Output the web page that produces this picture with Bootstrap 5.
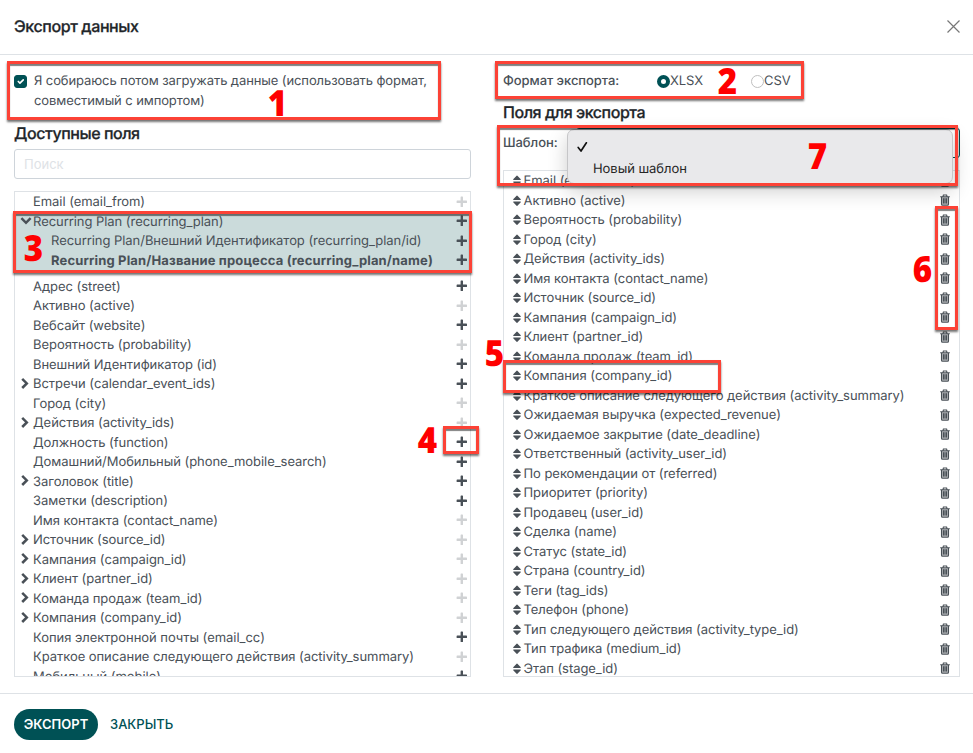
<!DOCTYPE html>
<html lang="ru">
<head>
<meta charset="utf-8">
<title>Экспорт данных</title>
<link href="https://cdn.jsdelivr.net/npm/bootstrap@5.3.0/dist/css/bootstrap.min.css" rel="stylesheet">
<style>
body{font-family:Inter,"Liberation Sans",sans-serif;font-size:13px;line-height:19.5px;letter-spacing:-.05px;color:#495057;background:#fff;text-rendering:geometricPrecision}
.dialog-page{width:973px;height:753px;overflow:hidden}
.dialog-head{height:55px;padding:0 12px 2px 14px;border-color:#dee2e6!important}
.dialog-head h1,.pane-title{font-size:16px;font-weight:500;color:#212529;line-height:20px;margin:0;letter-spacing:-.4px;-webkit-text-stroke:.25px #212529}
.pane-title{letter-spacing:-.45px}
.dialog-main{height:638px;gap:32px;padding:16px 13px 0 14px}
.pane{width:457px}
.compat{height:52px;gap:7px}
.form-check-input.tick{width:13px;height:13px;margin:4px 0 0;border-radius:3px}
.form-check-input:checked{background-color:#005155;border-color:#005155}
.compat label{line-height:20px;letter-spacing:-.1px}
.search-box{height:30px;margin-top:6px;font-size:13px;padding:0 9px;border-color:#ced4da;border-radius:3px}
.search-box::placeholder{color:#dee2e6}
.field-list{border:1px solid #dee2e6;overflow:hidden}
.available{margin-top:12px;height:486px}
.chosen{margin-top:12px;height:507px}
.field-row{height:19.5px;white-space:nowrap}
.field-row>.flex-grow-1{padding-top:2px}
.available .field-row{padding:0 2px 0 6px}
.chosen .field-row{padding:0 8px 0 8px}
.export-name{margin-left:1.5px}
.twist{width:12px;height:12px;margin-bottom:2px;margin-left:-1px;margin-right:1px}
.field-open{background:#cbdbdb;margin-bottom:6.5px}
.field-open .child-row{padding-left:36px}
.child-row.fw-bold{letter-spacing:.15px}
.dim{opacity:.25}
.format-line{height:21px}
.format-line .form-check-input{width:13px;height:13px;margin:0;border-color:#bfbfbf}
.format-line .form-check-input:checked{background:#fff;border:4px solid #005155}
.format-label{width:154px;font-weight:500}
.export-title{margin-top:10px}
.template-line{height:30px;margin-top:6px}
.template-label{width:73px;font-weight:500;padding-top:2px}
.template-select{border:1px solid #005155;border-radius:3px;height:30px}
.template-menu{left:567px;top:129px;width:386px;height:55px;background:#e9e9eb;border:1px solid #c6c6c8;border-radius:7px;box-shadow:0 7px 20px rgba(0,0,0,.2);color:#262626;padding:7px 9px}
.menu-item{height:22px;padding-top:1px}
.dialog-foot{height:60px;padding:2px 14px 0;border-color:#dee2e6!important}
.act{font-size:13px;font-weight:500;line-height:19px;height:31px;padding:5px 9px;border-radius:16px;border:1px solid transparent}
.act-main{background:#005155;color:#fff;width:84px;padding:5px 0;font-weight:600}
.act-plain{color:#005155;margin-left:2px;letter-spacing:0}
.callout{border:3px solid #fc4236;box-shadow:0 2px 2px rgba(0,0,0,.55),inset 0 2px 1px rgba(0,0,0,.5)}
.step{font-family:"Open Sans","Noto Sans",sans-serif;font-weight:800;letter-spacing:0;font-size:36px;line-height:36px;color:red;transform:scaleX(.92)}
.c1{left:7px;top:61px;width:434px;height:59px}.c2{left:495px;top:61px;width:309px;height:38px}
.c3{left:13px;top:211px;width:459px;height:62px}.c4{left:443px;top:426px;width:36px;height:28px}
.c5{left:503px;top:360px;width:218px;height:33px}.c6{left:935px;top:206px;width:23px;height:124px}
.c7{left:497px;top:125px;width:461px;height:61px}
.s1{left:267px;top:85px}.s2{left:717px;top:63px}.s3{left:23px;top:230px}.s4{left:417px;top:422px}
.s5{left:484px;top:335px}.s6{left:912px;top:251px}.s7{left:807px;top:138px}
</style>
<script src="https://cdn.jsdelivr.net/npm/bootstrap@5.3.0/dist/js/bootstrap.bundle.min.js"></script>
</head>
<body>
<svg class="d-none">
<symbol id="plus" viewBox="0 0 12 12"><path d="M4.6 1.2q0-.6.6-.6h1.2q.6 0 .6.6v3.4h3.4q.6 0 .6.6v1.2q0 .6-.6.6H7v3.4q0 .6-.6.6H5.2q-.6 0-.6-.6V7H1.2q-.6 0-.6-.6V5.2q0-.6.6-.6h3.4z" fill="currentColor"/></symbol>
<symbol id="right" viewBox="0 0 12 12"><path d="M2.2 1.8 6.8 6.4 2.2 11" fill="none" stroke="currentColor" stroke-width="2.5"/></symbol>
<symbol id="down" viewBox="0 0 12 12"><path d="M1.4 4.2 6 8.8 10.6 4.2" fill="none" stroke="currentColor" stroke-width="2.5"/></symbol>
<symbol id="sort" viewBox="0 0 10 13"><path d="M1.2 5.2 4.6 1.8q.4-.4.8 0L8.800 5.200q.3.8-.5.8H1.700q-.8 0-.5-.8zM1.200 8.300 4.600 11.700q.4.4.8 0L8.800 8.300q.3-.8-.5-.8H1.700q-.8 0-.5.8z" fill="currentColor"/></symbol>
<symbol id="trash" viewBox="0 0 12 12"><path d="M4 2.4 4.4 1h3.2L8 2.400M1.200 2.700h9.600M2.500 2.800v7.100q0 1.300 1 1.300h5q1 0 1-1.300V2.800M4.500 4.300v5.200M6 4.300v5.200M7.500 4.300v5.200" fill="none" stroke="currentColor" stroke-width="1.1"/><path d="M2.500 3h7v8h-7z" fill="currentColor" opacity=".45"/></symbol>
</svg>
<div class="dialog-page position-relative">
<header class="dialog-head d-flex align-items-center justify-content-between border-bottom">
<h1>Экспорт данных</h1>
<svg width="15" height="15" viewBox="0 0 15 15"><path d="M1.500 1.500 13.500 13.500M13.500 1.500 1.500 13.500" stroke="#777" stroke-width="1.200"/></svg>
</header>
<main class="dialog-main d-flex">
<section class="pane">
<div class="compat d-flex">
<input class="form-check-input tick flex-shrink-0" type="checkbox" id="compat" checked>
<label for="compat">Я собираюсь потом загружать данные (использовать формат,<br>совместимый с импортом)</label>
</div>
<h2 class="pane-title">Доступные поля</h2>
<input class="form-control search-box" placeholder="Поиск">
<div class="field-list available" id="available"></div>
</section>
<section class="pane">
<div class="format-line d-flex align-items-center">
<span class="format-label">Формат экспорта:</span>
<label class="d-flex align-items-center"><input class="form-check-input" type="radio" name="fmt" checked>XLSX</label>
<label class="d-flex align-items-center ms-5"><input class="form-check-input" type="radio" name="fmt">CSV</label>
</div>
<h2 class="pane-title export-title">Поля для экспорта</h2>
<div class="template-line d-flex align-items-center"><span class="template-label">Шаблон:</span><div class="template-select flex-grow-1"></div></div>
<div class="field-list chosen" id="chosen"></div>
</section>
</main>
<footer class="dialog-foot d-flex align-items-center border-top">
<button class="act act-main">ЭКСПОРТ</button><button class="btn act act-plain">ЗАКРЫТЬ</button>
</footer>
<div class="template-menu position-absolute">
<div class="menu-item"><svg width="11" height="12" viewBox="0 0 11 12"><path d="M1.200 6.500 4 10 9.400 1.800" fill="none" stroke="#111" stroke-width="1.700" stroke-linecap="round" stroke-linejoin="round"/></svg></div>
<div class="menu-item ps-3">Новый шаблон</div>
</div>
<div class="callout position-absolute c1"></div><div class="callout position-absolute c2"></div><div class="callout position-absolute c3"></div><div class="callout position-absolute c4"></div><div class="callout position-absolute c5"></div><div class="callout position-absolute c6"></div><div class="callout position-absolute c7"></div>
<span class="step position-absolute s1">1</span><span class="step position-absolute s2">2</span><span class="step position-absolute s3">3</span><span class="step position-absolute s4">4</span><span class="step position-absolute s5">5</span><span class="step position-absolute s6">6</span><span class="step position-absolute s7">7</span>
</div>
<script>
const icon=(id,w,h,c='')=>`<svg class="flex-shrink-0 ${c}" width="${w}" height="${h}"><use href="#${id}"/></svg>`;
// Prefix ">" marks an expandable field, suffix "-" marks one that is already exported.
const row=s=>{
  const open=s[0]==='>', used=s.endsWith('-');
  const name=s.replace(/^>/,'').replace(/-$/,'');
  return `<div class="field-row d-flex align-items-center">${open?icon('right',12,12,'twist'):'<span class="twist"></span>'}<span class="flex-grow-1">${name}</span>${icon('plus',12,12,used?'dim':'')}</div>`;
};
const plus=icon('plus',12,12);
const group=`<div class="field-open"><div class="field-row d-flex align-items-center">${icon('down',12,12,'twist')}<span class="flex-grow-1">Recurring Plan (recurring_plan)</span>${plus}</div>
<div class="field-row child-row d-flex align-items-center"><span class="flex-grow-1">Recurring Plan/Внешний Идентификатор (recurring_plan/id)</span>${plus}</div>
<div class="field-row child-row d-flex align-items-center fw-bold"><span class="flex-grow-1">Recurring Plan/Название процесса (recurring_plan/name)</span>${plus}</div></div>`;
const left=`Адрес (street)|Активно (active)-|Вебсайт (website)|Вероятность (probability)-|Внешний Идентификатор (id)|>Встречи (calendar_event_ids)|Город (city)-|>Действия (activity_ids)-|Должность (function)|Домашний/Мобильный (phone_mobile_search)|>Заголовок (title)|Заметки (description)|Имя контакта (contact_name)-|>Источник (source_id)-|>Кампания (campaign_id)-|>Клиент (partner_id)-|>Команда продаж (team_id)-|>Компания (company_id)-|Копия электронной почты (email_cc)|Краткое описание следующего действия (activity_summary)-|Мобильный (mobile)`.split('|');
document.getElementById('available').innerHTML=row('Email (email_from)-')+group+left.map(row).join('');
const right=`Email (email_from)|Активно (active)|Вероятность (probability)|Город (city)|Действия (activity_ids)|Имя контакта (contact_name)|Источник (source_id)|Кампания (campaign_id)|Клиент (partner_id)|Команда продаж (team_id)|Компания (company_id)|Краткое описание следующего действия (activity_summary)|Ожидаемая выручка (expected_revenue)|Ожидаемое закрытие (date_deadline)|Ответственный (activity_user_id)|По рекомендации от (referred)|Приоритет (priority)|Продавец (user_id)|Сделка (name)|Статус (state_id)|Страна (country_id)|Теги (tag_ids)|Телефон (phone)|Тип следующего действия (activity_type_id)|Тип трафика (medium_id)|Этап (stage_id)`.split('|');
document.getElementById('chosen').innerHTML=right.map(t=>`<div class="field-row d-flex align-items-center">${icon('sort',10,13)}<span class="flex-grow-1 export-name">${t}</span>${icon('trash',12,12)}</div>`).join('');
</script>
</body>
</html>
